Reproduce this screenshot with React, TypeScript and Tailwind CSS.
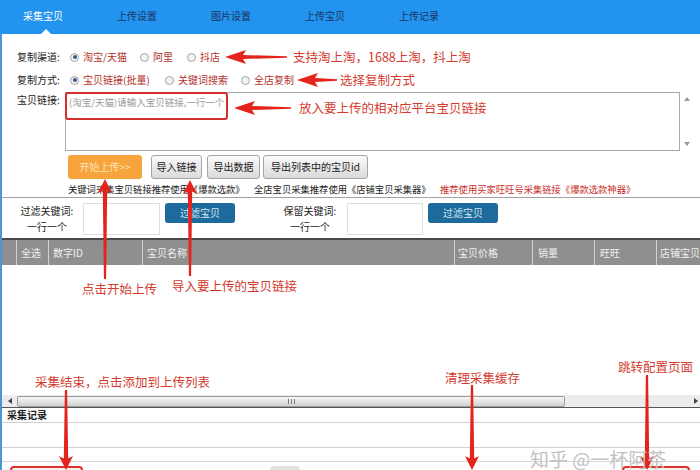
import React from "react";

const ARROW = "#e3231c";

function LeftArrow({ w }: { w: number }) {
  return (
    <svg width={w} height={14} viewBox={`0 0 ${w} 14`} className="shrink-0">
      <polygon points={`0,7 21,0 18,5 ${w},6.3 ${w},7.7 18,9 21,14`} fill={ARROW} />
    </svg>
  );
}

function VArrow({ h, up }: { h: number; up?: boolean }) {
  const pts = `7,0 14,14 9.2,11.5 8.1,${h} 5.9,${h} 4.8,11.5 0,14`;
  return (
    <svg width={14} height={h} viewBox={`0 0 14 ${h}`} className={up ? "block" : "block -scale-y-100"}>
      <polygon points={pts} fill={ARROW} />
    </svg>
  );
}

function Radio({ on }: { on?: boolean }) {
  return (
    <span className="w-[9px] h-[9px] rounded-full border border-[#a4a4a4] bg-[#f3f3f3] flex items-center justify-center shrink-0">
      {on && <span className="w-[4px] h-[4px] rounded-full bg-[#34598f]" />}
    </span>
  );
}

function Opt({ w, on, text }: { w: string; on?: boolean; text: string }) {
  return (
    <span className={`flex items-center gap-[4px] shrink-0 ${w}`}>
      <Radio on={on} />
      <span className="text-[#b3322c] whitespace-nowrap">{text}</span>
    </span>
  );
}

const grayBtn =
  "h-full rounded-[3px] border border-[#a5a5a5] bg-linear-to-b from-[#fbfbfb] to-[#dadada] flex items-center justify-center text-[#222] whitespace-nowrap shrink-0";

const note = "text-[12.5px] text-[#d33b2f] leading-none whitespace-nowrap";

export default function App() {
  return (
    <div className="relative w-[700px] h-[470px] overflow-hidden bg-white font-['Noto_Sans_CJK_SC','Noto_Sans',sans-serif] text-[#222] leading-none">
      {/* tab bar */}
      <div className="flex h-[34px] bg-[#2293ee] text-[10px]">
        <div className="relative w-[90px] h-full flex items-center justify-center pr-[4px] pb-[3px] text-white">
          采集宝贝
          <span className="absolute bottom-0 left-[41px] w-0 h-0 border-x-[5px] border-x-transparent border-b-[5px] border-b-white" />
        </div>
        {["上传设置", "图片设置", "上传宝贝", "上传记录"].map((t) => (
          <div key={t} className="w-[94px] h-full flex items-center justify-center pb-[3px] text-[#1b3461]">
            {t}
          </div>
        ))}
      </div>

      <div className="border-l-2 border-[#4b95d8] min-h-[436px]">
        {/* form */}
        <div className="flex flex-col border-b border-[#a3a3a3] text-[10px]">
          <div className="flex items-center h-[20px] mt-[13px] pl-[15px]">
            <span className="w-[53px] shrink-0">复制渠道:</span>
            <Opt w="w-[70px]" on text="淘宝/天猫" />
            <Opt w="w-[47px]" text="阿里" />
            <Opt w="w-[38px]" text="抖店" />
            <LeftArrow w={62} />
            <span className={`ml-[6px] ${note}`}>支持淘上淘，1688上淘，抖上淘</span>
          </div>
          <div className="flex items-center h-[20px] mt-[3px] pl-[15px]">
            <span className="w-[53px] shrink-0">复制方式:</span>
            <Opt w="w-[95px]" on text="宝贝链接(批量)" />
            <Opt w="w-[76px]" text="关键词搜索" />
            <Opt w="w-[56px]" text="全店复制" />
            <LeftArrow w={40} />
            <span className={`ml-[3px] ${note}`}>选择复制方式</span>
          </div>
          <div className="flex mt-[2px] h-[59px] pl-[15px]">
            <span className="w-[48px] pt-[3px] shrink-0">宝贝链接:</span>
            <div className="relative w-[615px] h-full border border-[#a9a9a9] bg-white shrink-0">
              <div className="pl-[3px] pt-[5px] text-[9.5px] text-[#9a9a9a] whitespace-nowrap">
                (淘宝/天猫)请输入宝贝链接,一行一个
              </div>
              <div className="absolute left-[-1px] top-[-1px] w-[163px] h-[28px] border-2 border-[#d3302c] rounded-[3px]" />
              <div className="absolute left-[168px] top-[8px]">
                <LeftArrow w={57} />
              </div>
              <div className={`absolute left-[233px] top-[9px] ${note}`}>放入要上传的相对应平台宝贝链接</div>
            </div>
            <div className="w-[13px] h-full flex flex-col items-center justify-between py-[5px]">
              <svg width="6" height="4" viewBox="0 0 6 4"><polygon points="3,0 6,4 0,4" fill="#9a9a9a" /></svg>
              <svg width="6" height="4" viewBox="0 0 6 4"><polygon points="0,0 6,0 3,4" fill="#9a9a9a" /></svg>
            </div>
          </div>
          <div className="flex mt-[4px] h-[24px] pl-[66px]">
            <div className="w-[74px] h-full rounded-[3px] bg-[#f8a43c] text-[#fde4bd] flex items-center justify-center shrink-0">
              开始上传&gt;&gt;
            </div>
            <div className={`ml-[9px] w-[51px] ${grayBtn}`}>导入链接</div>
            <div className={`ml-[5px] w-[53px] ${grayBtn}`}>导出数据</div>
            <div className={`ml-[3px] w-[105px] ${grayBtn}`}>导出列表中的宝贝id</div>
          </div>
          <div className="flex items-center mt-[4px] h-[14px] pl-[66px] text-[9.3px] whitespace-nowrap">
            <span className="w-[186px] shrink-0">关键词采集宝贝链接推荐使用《爆款选款》</span>
            <span className="w-[186px] shrink-0">全店宝贝采集推荐使用《店铺宝贝采集器》</span>
            <span className="text-[#c9302c]">推荐使用买家旺旺号采集链接《爆款选款神器》</span>
          </div>
        </div>

        {/* filter row */}
        <div className="flex items-start h-[40px] pt-[5px] pl-[17px] text-[10px]">
          <div className="w-[56px] flex flex-col items-center gap-[6px] pt-[3px] shrink-0 whitespace-nowrap">
            <span>过滤关键词:</span>
            <span>一行一个</span>
          </div>
          <div className="ml-[8px] w-[77px] h-[32px] border border-[#dedede] bg-white shrink-0" />
          <div className="ml-[5px] w-[70px] h-[20px] rounded-[3px] bg-[#1d6b9c] text-[#d6e6f2] flex items-center justify-center shrink-0">
            过滤宝贝
          </div>
          <div className="ml-[47px] w-[56px] flex flex-col items-center gap-[6px] pt-[3px] shrink-0 whitespace-nowrap">
            <span>保留关键词:</span>
            <span>一行一个</span>
          </div>
          <div className="ml-[9px] w-[76px] h-[32px] border border-[#dedede] bg-white shrink-0" />
          <div className="ml-[5px] w-[70px] h-[20px] rounded-[3px] bg-[#1d6b9c] text-[#d6e6f2] flex items-center justify-center shrink-0">
            过滤宝贝
          </div>
        </div>

        {/* table header */}
        <div className="flex h-[27px] border-t-2 border-[#4a4a4a] bg-[#8f8f8f] text-[10px] text-[#efefef]">
          <div className="w-[15px] border-r border-[#d0d0d0] shrink-0" />
          <div className="w-[32px] border-r border-[#d0d0d0] flex items-center pl-[4px] shrink-0">全选</div>
          <div className="w-[94px] border-r border-[#d0d0d0] flex items-center pl-[4px] shrink-0">数字ID</div>
          <div className="w-[312px] border-r border-[#d0d0d0] flex items-center pl-[4px] shrink-0">宝贝名称</div>
          <div className="w-[78px] border-r border-[#d0d0d0] flex items-center pl-[3px] shrink-0">宝贝价格</div>
          <div className="w-[62px] border-r border-[#d0d0d0] flex items-center pl-[5px] shrink-0">销量</div>
          <div className="w-[62px] border-r border-[#d0d0d0] flex items-center pl-[5px] shrink-0">旺旺</div>
          <div className="flex-1 flex items-center pl-[3px] whitespace-nowrap overflow-hidden">店铺宝贝</div>
        </div>

        {/* table body */}
        <div className="h-[130px] bg-white" />

        {/* horizontal scrollbar */}
        <div className="flex items-center h-[13px] bg-[#ececec] border-b border-[#555]">
          <div className="w-[15px] flex items-center justify-center shrink-0">
            <svg width="4" height="6" viewBox="0 0 4 6"><polygon points="4,0 4,6 0,3" fill="#444" /></svg>
          </div>
          <div className="w-[548px] h-[11px] rounded-[2px] border border-[#9c9c9c] bg-linear-to-b from-[#f7f7f7] to-[#d2d2d2] flex items-center justify-center gap-[2px] shrink-0">
            <span className="w-px h-[5px] bg-[#777]" />
            <span className="w-px h-[5px] bg-[#777]" />
            <span className="w-px h-[5px] bg-[#777]" />
          </div>
          <div className="flex-1" />
          <div className="w-[8px] flex items-center justify-center shrink-0">
            <svg width="4" height="6" viewBox="0 0 4 6"><polygon points="0,0 4,3 0,6" fill="#444" /></svg>
          </div>
        </div>

        {/* log */}
        <div className="h-[14px] pl-[5px] flex items-center text-[10px] font-bold">采集记录</div>
        <div className="h-[26px] border-y border-[#d2d2d2]" />
        <div className="h-[14px] border-b border-[#d8d8d8]" />
        <div className="flex mt-[4px] pl-[8px]">
          <div className="w-[73px] h-[20px] border-2 border-[#e0322a] rounded-[4px] bg-[#f1f1f1] shrink-0" />
          <div className="ml-[187px] w-[30px] h-[20px] rounded-[4px] bg-[#e2e2e2] shrink-0" />
          <div className="ml-[322px] w-[68px] h-[20px] border-2 border-[#e0322a] rounded-[4px] bg-[#f1f1f1] shrink-0" />
        </div>
      </div>

      {/* annotation overlays */}
      <div className="absolute left-[98px] top-[179px]"><VArrow h={100} up /></div>
      <div className="absolute left-[183px] top-[180px]"><VArrow h={96} up /></div>
      <div className={`absolute left-[82px] top-[283px] ${note}`}>点击开始上传</div>
      <div className={`absolute left-[172px] top-[280px] ${note}`}>导入要上传的宝贝链接</div>

      <div className={`absolute left-[35px] top-[376px] ${note}`}>采集结束，点击添加到上传列表</div>
      <div className="absolute left-[59px] top-[390px]"><VArrow h={80} /></div>
      <div className={`absolute left-[445px] top-[372px] ${note}`}>清理采集缓存</div>
      <div className="absolute left-[465px] top-[385px]"><VArrow h={85} /></div>
      <div className={`absolute left-[618px] top-[361px] ${note}`}>跳转配置页面</div>
      <div className="absolute left-[640px] top-[375px]"><VArrow h={95} /></div>

      <div className="absolute left-[530px] top-[449px] text-[19px] text-[#c2c2c2] leading-none whitespace-nowrap">
        知乎 @一杯阿茶
      </div>
    </div>
  );
}
